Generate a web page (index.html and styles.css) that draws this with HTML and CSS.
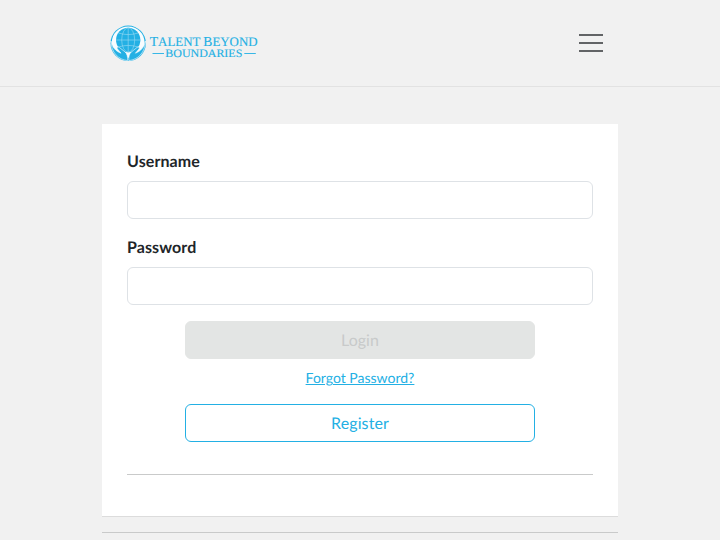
FILE: index.html
```
<!DOCTYPE html>
<html lang="en">
<head>
<meta charset="utf-8">
<title>Talent Beyond Boundaries</title>
<link rel="stylesheet" href="styles.css">
</head>
<body>
<header class="header">
  <a class="brand">
    <svg class="logo" viewBox="0 0 150 40" aria-label="Talent Beyond Boundaries">
      <circle cx="20.200" cy="19.300" r="17.700" fill="#23b0e4"/>
      <path d="M3.800 19C3.800 9.500 11 2.600 20.200 2.600S36.600 9.500 36.600 19C35.800 26 31 29 26 31L20.200 34 14.400 31C9.400 29 4.600 26 3.800 19z" fill="#f8fcfe"/>
      <circle cx="20.200" cy="16" r="12.200" fill="#23b0e4"/>
      <g fill="none" stroke="#9cdcf3" stroke-width=".6">
        <path d="M20.200 3.800v24.400M8 16h24.400M10.400 9q9.800 3.200 19.600 0M10.400 23q9.800-3.200 19.600 0"/>
        <ellipse cx="20.200" cy="16" rx="6.500" ry="12.200"/>
      </g>
      <path id="hand" fill="#23b0e4" stroke="#f8fcfe" stroke-width=".6" d="M3 17C4 23 7.500 27.200 13 29.200L9.300 24.800C8.400 23.200 10 22.200 11.400 23.500L16.800 27.700C19.200 29.800 19.800 32.500 19.600 36.600C10.500 35.700 3 28.500 3 17z"/>
      <use href="#hand" transform="translate(40.400 0) scale(-1 1)"/>
      <g fill="#23b0e4" stroke="#23b0e4" stroke-width=".15" font-family="Liberation Serif, serif">
        <text x="41.800" y="22.300" textLength="107.700" lengthAdjust="spacingAndGlyphs"><tspan font-size="13.700">T</tspan><tspan font-size="13">ALENT </tspan><tspan font-size="13.700">B</tspan><tspan font-size="13">EYOND</tspan></text>
        <text x="57.300" y="33.200" font-size="11.400" textLength="77" lengthAdjust="spacingAndGlyphs">BOUNDARIES</text>
      </g>
      <path d="M44.500 29.500h11.500M136.300 29.500h11.500" stroke="#23b0e4" stroke-width=".9"/>
    </svg>
  </a>
  <div class="menu"><span></span><span></span><span></span></div>
</header>
<main class="page">
  <form class="card">
    <label class="label" for="username">Username</label>
    <input class="input" id="username" type="text">
    <label class="label" for="password">Password</label>
    <input class="input" id="password" type="password">
    <div class="actions">
      <button class="button login" type="button" disabled>Login</button>
      <a class="forgot" href="#">Forgot Password?</a>
      <button class="button register" type="button">Register</button>
    </div>
    <hr class="rule">
  </form>
  <hr class="rule footer-rule">
</main>
</body>
</html>
```
FILE: styles.css
```
* { box-sizing: border-box; }
body {
  margin: 0;
  height: 540px;
  overflow: hidden;
  background: #f1f1f1;
  color: #212529;
  font-family: Lato, sans-serif;
  font-size: 16px;
  line-height: 24px;
  text-rendering: geometricPrecision;
}
.header {
  height: 87px;
  padding: 24px 117px 0 108px;
  display: flex;
  justify-content: space-between;
  border-bottom: 1px solid #e2e2e2;
}
.logo { display: block; width: 150px; height: 40px; }
.menu {
  width: 24px;
  padding-top: 10px;
  display: flex;
  flex-direction: column;
  gap: 6px;
}
.menu span { height: 2px; background: #626466; }
.page { width: 516px; margin: 37px auto 0; }
.card {
  height: 393px;
  padding: 25px;
  background: #fff;
  border-bottom: 1px solid #dcdcdc;
}
.label {
  display: block;
  padding-top: 1px;
  margin-bottom: 7px;
  font-weight: 700;
  letter-spacing: .1px;
}
.input {
  display: block;
  width: 100%;
  height: 38px;
  margin: 0 0 16px;
  padding: 6px 12px;
  border: 1px solid #dee2e6;
  border-radius: 6px;
  background: #fff;
  font: inherit;
}
.actions {
  display: flex;
  flex-direction: column;
  align-items: center;
}
.button {
  width: 350px;
  height: 38px;
  padding: 2px 0 0;
  border: 1px solid #23b0e4;
  border-radius: 6px;
  background: #fff;
  color: #23b0e4;
  font: inherit;
  text-rendering: inherit;
}
.register { letter-spacing: .1px; }
.login {
  border-color: #e3e5e4;
  background: #e3e5e4;
  color: #c8caca;
}
.forgot {
  margin: 8px 0 16px;
  color: #23b0e4;
  font-size: 14px;
  line-height: 21px;
}
.rule {
  margin: 32px 0 0;
  border: 0;
  border-top: 1px solid #c9caca;
}
.footer-rule { margin-top: 15px; }
```
